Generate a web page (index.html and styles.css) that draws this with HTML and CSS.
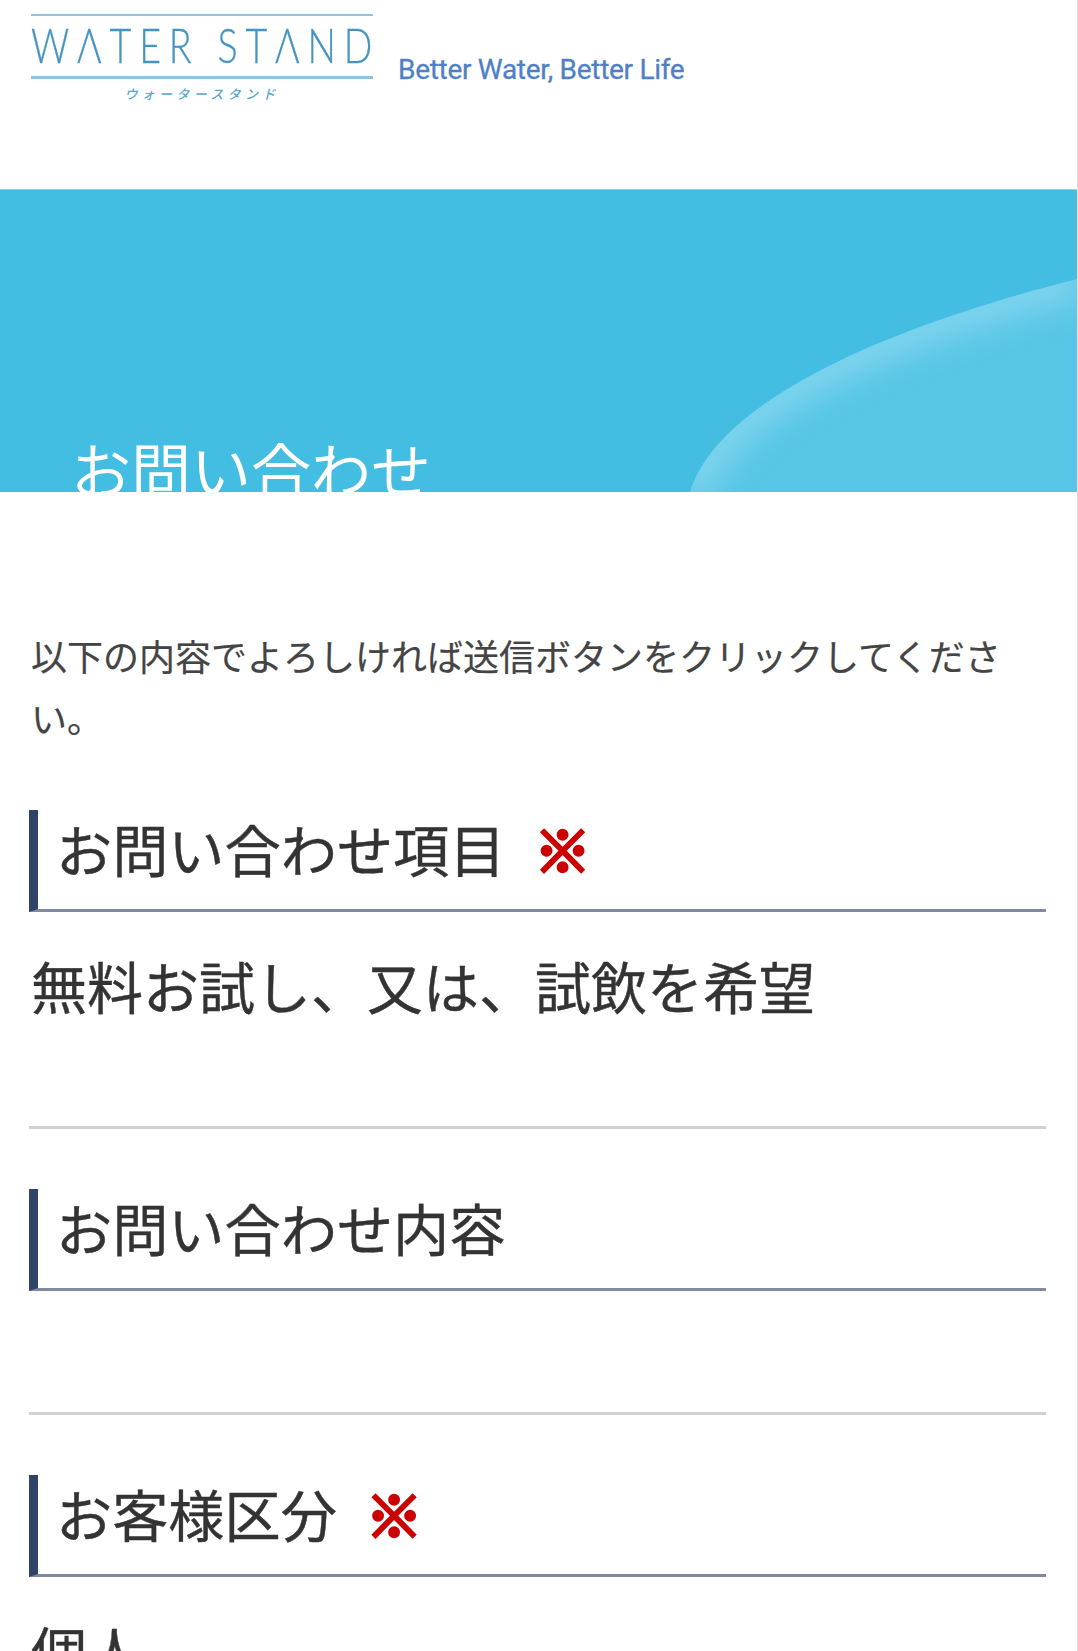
FILE: index.html
```html
<!DOCTYPE html>
<html lang="ja">
<head>
<meta charset="utf-8">
<title>お問い合わせ</title>
<link rel="stylesheet" href="styles.css">
</head>
<body>
<div class="page">
  <header class="site-header">
    <div class="logo" aria-label="WATER STAND">
      <div class="logo-name"><span class="logo-word">WΛTER STΛND</span></div>
      <div class="logo-kana">ウォータースタンド</div>
    </div>
    <div class="tagline">Better Water, Better Life</div>
  </header>
  <section class="hero">
    <svg class="hero-wave" viewBox="0 0 387 213" aria-hidden="true">
      <defs>
        <clipPath id="wave-clip">
          <path d="M0 213C25 130 170 55 387 0V213Z"/>
        </clipPath>
        <filter id="wave-blur" x="-20%" y="-20%" width="140%" height="140%">
          <feGaussianBlur stdDeviation="14"/>
        </filter>
      </defs>
      <g clip-path="url(#wave-clip)">
        <rect width="387" height="213" fill="#58c6e6"/>
        <path d="M0 213C25 130 170 55 387 0" fill="none" stroke="#7cd3ed" stroke-width="44" filter="url(#wave-blur)"/>
      </g>
    </svg>
    <h1 class="hero-title">お問い合わせ</h1>
  </section>
  <main class="content">
    <p class="lead">以下の内容でよろしければ送信ボタンをクリックしてください。</p>
    <section class="field field-first">
      <h2 class="field-head">お問い合わせ項目<span class="req">※</span></h2>
      <p class="field-value">無料お試し、又は、試飲を希望</p>
    </section>
    <section class="field field-empty">
      <h2 class="field-head">お問い合わせ内容</h2>
    </section>
    <section class="field field-last">
      <h2 class="field-head">お客様区分<span class="req">※</span></h2>
      <p class="field-value">個人</p>
    </section>
  </main>
</div>
</body>
</html>
```

FILE: styles.css
```css
* { box-sizing: border-box; }
html, body { margin: 0; padding: 0; height: 100%; overflow: hidden; background: #fff; }
body { font-family: "Noto Sans CJK JP", "Noto Sans", sans-serif; color: #333; }
.page { width: 1078px; height: 1651px; overflow: hidden; border-right: 1px solid #e0e0e0; }

.site-header { height: 189px; padding: 14px 0 0 31px; display: flex; align-items: flex-start; }
.logo { width: 342px; }
.logo-name {
  height: 65px;
  border-top: 2px solid #8fc3e0;
  border-bottom: 3px solid #8fc3e0;
  font-family: "Lato", sans-serif;
  font-weight: 300;
  font-size: 47px;
  line-height: 58px;
  color: #4494c2;
  white-space: nowrap;
}
.logo-word {
  display: inline-block;
  letter-spacing: 9.8px;
  -webkit-text-stroke: 0.3px #4494c2;
  transform: scaleX(0.8);
  transform-origin: left center;
}
.logo-kana {
  margin-top: 7px;
  text-align: center;
  font-size: 13px;
  line-height: 16px;
  letter-spacing: 4.3px;
  font-style: italic;
  font-weight: 500;
  color: #5aa6cf;
}
.tagline {
  margin: 38px 0 0 25px;
  font-family: "Roboto", sans-serif;
  font-size: 28px;
  line-height: 36px;
  letter-spacing: -0.3px;
  -webkit-text-stroke: 0.3px #4f7fc4;
  color: #4f7fc4;
  white-space: nowrap;
}

.hero {
  position: relative;
  height: 303px;
  background: #44bde2;
  border-top: 1px solid #8ed6ec;
  overflow: hidden;
  display: flex;
  align-items: flex-end;
  padding-left: 71px;
}
.hero-wave { position: absolute; right: 0; bottom: 0; width: 387px; height: 213px; }
.hero-title {
  position: relative;
  margin: 0 0 -20px;
  font-size: 60px;
  line-height: 88px;
  font-weight: 400;
  color: #fff;
  white-space: nowrap;
}

.content { padding: 0 31px 0 29px; }
.lead { margin: 0; padding: 132px 0 0 2px; font-size: 36px; line-height: 62px; color: #444; -webkit-text-stroke: 0.2px #444; }
.field { border-bottom: 3px solid #d0d0d0; margin-top: 60px; }
.field-first { margin-top: 62px; height: 319px; }
.field-empty { height: 226px; }
.field-last { border-bottom: 0; }
.field-head {
  margin: 0;
  height: 102px;
  border-left: 9px solid #2f4468;
  border-bottom: 3px solid #7f8aa0;
  padding-left: 18px;
  font-size: 56.2px;
  line-height: 76px;
  font-weight: 400;
  color: #333;
  -webkit-text-stroke: 0.4px #333;
  white-space: nowrap;
}
.req {
  margin-left: 29px;
  color: #cc0000;
  font-weight: 700;
  -webkit-text-stroke: 3.5px #cc0000;
}
.field-value {
  margin: 0;
  padding: 31px 0 0 2px;
  font-size: 56px;
  line-height: 84px;
  color: #333;
  -webkit-text-stroke: 0.4px #333;
}
```
